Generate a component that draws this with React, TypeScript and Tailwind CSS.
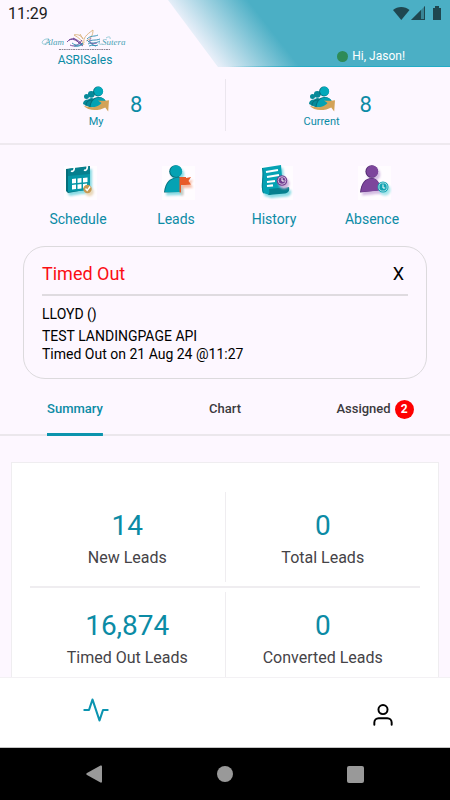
import { useState, type ReactNode } from "react";

function BrandLogo() {
  return (
    <svg width="90" height="24" viewBox="0 0 90 24" role="img" aria-label="Alam Sutera" fill="none">
      <g fontFamily="Liberation Serif, serif" fontStyle="italic" fontSize="9" fill="#4aa3b5">
        <text x="5" y="17">Alam</text>
        <text x="62" y="17">Sutera</text>
      </g>
      <path d="M9 11c-7-1-9 6-4 5 2 0 4-2 6-4M62 16c-3 1-4-1-2-2M66 10c3-2 5-1 4 1" stroke="#6fb9c8" strokeWidth="0.7" />
      <path d="M44 17C42 12 39 10 34 7c3-1 7 0 9 4M44 15c-1-5 2-8 9-13 0 5-2 9-7 11M40 6l3 5" stroke="#d9b27c" strokeWidth="0.9" />
      <path d="M27 14c5-6 10-3 15 2M29 12c5-2 8 1 13 5M30 17c4 2 8 1 12-5M33 10c3 1 5 5 10 8" stroke="#6b3f93" strokeWidth="0.9" />
      <path d="M32 15c4 3 8 3 11 0M34 18c3 1 6 0 9-2M47 11c4-4 7-2 11-4M48 14c4-3 7-1 12-3M48 16c4-2 7 0 12-3M49 18c4-2 6 1 9-1M47 12c4 4 6 5 9 6" stroke="#2b8cb0" strokeWidth="0.9" />
      <path d="M51 10c-3 4 0 7 6 5" stroke="#6b3f93" strokeWidth="0.7" />
      <path d="M19 21.500h51" stroke="#8d8494" strokeWidth="1" strokeDasharray="2 0.7 1.4 0.6" />
    </svg>
  );
}

function CareIcon() {
  return (
    <svg width="28" height="28" viewBox="0 0 28 28" aria-hidden="true">
      <g fill="#078a99">
        <circle cx="4.500" cy="10.500" r="2.500" />
        <circle cx="9.300" cy="8.300" r="3.400" />
        <path d="M1 18c0-3 2-4.500 5-4.500L9 12c3 0 4 2 4 4l-4 6z" />
      </g>
      <path d="M4 20c0-4 2-6 6-6" stroke="#05626e" strokeWidth="0.8" fill="none" />
      <circle cx="16" cy="5.500" r="4.900" fill="#056f7b" />
      <circle cx="16.600" cy="5.200" r="4.500" fill="#04a9bb" />
      <path d="M7.500 21c.5-6 4-10 9-10 4 0 6 2 7 4l-6 7z" fill="#056f7b" />
      <path d="M8.500 21c.5-5.500 4-9.500 8.500-9.500 4 0 6 2 7 4l-6 6z" fill="#04a2b3" />
      <path d="M1.500 19.500c4 1.500 8 2 11 1.500 4-.8 5.500-2.300 7-4L16 14.500c3 .5 6 .5 11-.2l-.8 11.200-3-4C17 25 6 25.500 1.500 19.500z" fill="#d3a358" />
    </svg>
  );
}

function IconFrame({ children }: { children: ReactNode }) {
  return (
    <svg width="40" height="40" viewBox="0 0 40 40" aria-hidden="true">
      <rect x="6" y="4" width="33" height="34" fill="#fffcff" />
      {children}
    </svg>
  );
}

function ScheduleIcon() {
  return (
    <IconFrame>
      <g className="drop-shadow-[2px_3px_1px_#8adbe4]">
        <path d="M8 7l24-3v23L10 31l-2-2z" fill="#056d7a" />
        <path d="M10 7l22-2v23l-22 2z" fill="#0596a6" />
        <path d="M10 7l22-2v7l-22 2z" fill="#067f8e" />
      </g>
      <path d="M13 9c2 1 4-1 3-4M26 8c2 1 4-1 3-4" stroke="#fff" strokeWidth="1.700" fill="none" />
      <path d="M14 17l4-.4v4.400l-4 .4zM19.500 16.500l4-.4v4.400l-4 .4zM25 16l4.500-.4V20l-4.500.4zM14 23l4-.4v4.400l-4 .4zM19.500 22.500l4-.4v4.400l-4 .4zM25 22l4-.4v3l-4 2z" fill="#fff" />
      <g className="drop-shadow-[2px_3px_1px_#ecd9bb]">
        <circle cx="29.500" cy="27" r="4.200" fill="#c79a54" />
      </g>
      <path d="M27.500 26.500l1.700 2 3-4" stroke="#fff" strokeWidth="1.400" fill="none" />
    </IconFrame>
  );
}

function LeadsIcon() {
  return (
    <IconFrame>
      <g className="drop-shadow-[2px_3px_1px_#8adbe4]">
        <circle cx="19.500" cy="9.500" r="6.300" fill="#056d7a" />
        <path d="M8 30.500C9 20 14 15 24 15v15z" fill="#056d7a" />
        <circle cx="20.200" cy="9.200" r="5.900" fill="#05a2b3" />
        <path d="M9 30C10 20 15 15.500 25 15.500V30z" fill="#05a2b3" />
      </g>
      <g className="drop-shadow-[2px_3px_1px_#f6b9a3]">
        <path d="M23.500 15H30v1l5-1-2.500 4 2.500 3.500-6 .5h-4v7.500h-1.500z" fill="#e85a28" />
      </g>
    </IconFrame>
  );
}

function HistoryIcon() {
  return (
    <IconFrame>
      <g className="drop-shadow-[2px_3px_1px_#8adbe4]">
        <path d="M8 6l19-3 2 23-13 7-7-2c-3-8 1-16-1-25z" fill="#05a2b3" />
        <path d="M8 6c2 9-2 17 1 25l1 .5c-3-8 1-17-1-25.500z" fill="#067f8e" />
        <path d="M15 27l20-2c1 4-1 6-4 6.500L14 33c2-2 1.500-4 1-6z" fill="#067f8e" />
      </g>
      <path d="M12 10l12-2M13 15l12-2M13 20l8-1M13 24l6-.7" stroke="#fff" strokeWidth="2.200" />
      <g className="drop-shadow-[2px_3px_1px_#cdb4dc]">
        <circle cx="28" cy="18.500" r="5.300" fill="#713f91" />
      </g>
      <circle cx="28" cy="18.500" r="3.800" stroke="#d8c4e2" strokeWidth="0.9" fill="none" />
      <path d="M28 16v3h2.500" stroke="#fff" strokeWidth="1" fill="none" />
    </IconFrame>
  );
}

function AbsenceIcon() {
  return (
    <IconFrame>
      <g className="drop-shadow-[2px_3px_1px_#d3bce2]">
        <circle cx="19.700" cy="9.500" r="6.300" fill="#512a70" />
        <path d="M8 30.500C9 21 13 16 20 16c5 0 8 5 9 12z" fill="#512a70" />
        <circle cx="20.300" cy="9.300" r="5.900" fill="#7d469c" />
        <path d="M9 30C10 21 14 16.500 20 16.500c5 0 8 4.500 9 12z" fill="#7d469c" />
      </g>
      <g className="drop-shadow-[2px_3px_1px_#a5e5ea]">
        <circle cx="31" cy="25" r="5.500" fill="#12a3b2" />
      </g>
      <circle cx="31" cy="25" r="4.100" stroke="#b6e5ea" strokeWidth="0.9" fill="none" />
      <path d="M31 22.500V26h2.200" stroke="#fff" strokeWidth="1" fill="none" />
    </IconFrame>
  );
}

function StatusIcons() {
  return (
    <svg width="49" height="15" viewBox="0 0 49 15" aria-label="Wi-Fi, signal and battery status" role="img" fill="#1f4750">
      <path d="M0 4C4.500 0 12 0 16.500 4L8.300 14z" />
      <path d="M18 14L32 0v14z" opacity="0.4" />
      <path d="M18 14L28 4v10zM31 1l1-1v14h-4v-1h3z" />
      <path d="M40 2h2V0h4v2h2v12h-8z" />
    </svg>
  );
}

function PortfolioStat({ label, value }: { label: string; value: string }) {
  return (
    <div className="flex flex-1 items-center justify-center gap-5 border-[#ebe6ee] first:border-r">
      <div className="flex flex-col items-center pt-1.5">
        <CareIcon />
        <span className="text-[11px] leading-4">{label}</span>
      </div>
      <span className="text-[22px] leading-7">{value}</span>
    </div>
  );
}

const actions = [
  { label: "Schedule", icon: <ScheduleIcon /> },
  { label: "Leads", icon: <LeadsIcon /> },
  { label: "History", icon: <HistoryIcon /> },
  { label: "Absence", icon: <AbsenceIcon /> },
];

const metrics = [
  [
    { value: "14", label: "New Leads" },
    { value: "0", label: "Total Leads" },
  ],
  [
    { value: "16,874", label: "Timed Out Leads" },
    { value: "0", label: "Converted Leads" },
  ],
];

export default function App() {
  const [tab, setTab] = useState("Summary");
  const [noticeOpen, setNoticeOpen] = useState(true);

  return (
    <div className="flex h-screen flex-col bg-[#fdf7ff] font-[Roboto,sans-serif] text-[#0b8ba5]">
      <header className="relative h-[67px] shrink-0">
        <div className="absolute inset-y-0 right-0 left-[168px] flex items-end bg-[linear-gradient(52deg,#e6eef8_41px,#4bafc5_104px)] [clip-path:polygon(0_0,100%_0,100%_100%,50px_100%)]">
          <div className="h-px w-full bg-[linear-gradient(90deg,transparent_60px,#22acc6_140px)]" />
        </div>
        <div className="relative flex h-full justify-between">
          <div className="flex flex-col pl-2">
            <time className="pt-1 text-[16px] leading-5 text-[#1b1b1b]">11:29</time>
            <div className="flex flex-col items-center pt-1 pl-8">
              <BrandLogo />
              <span className="text-[12px] leading-4">ASRISales</span>
            </div>
          </div>
          <div className="flex flex-col items-end pt-1.5">
            <div className="pr-2">
              <StatusIcons />
            </div>
            <div className="flex items-center gap-1 pt-[27px] pr-[45px]">
              <span className="size-[11px] rounded-full bg-[#2e8b57]" />
              <span className="text-[12px] leading-4 text-white">Hi, Jason!</span>
            </div>
          </div>
        </div>
      </header>

      <main className="min-h-0 flex-1 overflow-hidden">
        <section className="flex h-[78px] border-b-2 border-[#eee9ef] py-3" aria-label="Portfolio">
          <PortfolioStat label="My" value="8" />
          <PortfolioStat label="Current" value="8" />
        </section>

        <nav className="grid grid-cols-4 px-[29px] pt-[17px]" aria-label="Shortcuts">
          {actions.map((action) => (
            <button key={action.label} type="button" className="flex flex-col items-center gap-2">
              {action.icon}
              <span className="text-[14px] leading-[18px]">{action.label}</span>
            </button>
          ))}
        </nav>

        {noticeOpen && (
          <section className="mx-[23px] mt-[18px] rounded-[22px] border border-[#dcdadd] px-[18px] py-[15px] text-[14px] text-black">
            <div className="flex items-center justify-between border-b-2 border-[#dfdbe0] pb-2">
              <h2 className="text-[18px] leading-6 text-[#fb0d14]">Timed Out</h2>
              <button type="button" aria-label="Dismiss" className="pr-1 text-[18px] leading-6" onClick={() => setNoticeOpen(false)}>
                X
              </button>
            </div>
            <p className="pt-2 leading-5">LLOYD ()</p>
            <p className="pt-[3px] leading-[18px]">TEST LANDINGPAGE API</p>
            <p className="leading-[18px]">Timed Out on 21 Aug 24 @11:27</p>
          </section>
        )}

        <div role="tablist" className="mt-[3px] grid h-[54px] grid-cols-3 border-b-2 border-[#ebe7ec] text-[13px] font-medium">
          {["Summary", "Chart", "Assigned"].map((name) => (
            <button
              key={name}
              type="button"
              role="tab"
              aria-selected={tab === name}
              onClick={() => setTab(name)}
              className="group flex justify-center text-[#3b3a3d] aria-selected:text-[#0b8ba5]"
            >
              <span className="-mb-0.5 flex h-[54px] items-center gap-1 rounded-t-sm bg-[length:100%_3px] bg-bottom bg-no-repeat group-aria-selected:bg-[linear-gradient(#0b94ad,#0b94ad)]">
                {name}
                {name === "Assigned" && (
                  <span className="flex size-[19px] items-center justify-center rounded-full bg-[#fe0000] text-[12px] font-bold text-white">2</span>
                )}
              </span>
            </button>
          ))}
        </div>

        <section className="mx-[11px] mt-[26px] border border-[#efedf0] bg-white px-[18px] pt-[29px]" aria-label="Lead summary">
          {metrics.map((row) => (
            <div key={row[0].label} className="mb-1 flex border-[#efedf0] first:border-b-2 first:pb-1">
              {row.map((metric) => (
                <div key={metric.label} className="flex h-[90px] flex-1 flex-col items-center border-[#efedf0] pt-[18px] first:border-r">
                  <span className="text-[28px] leading-8">{metric.value}</span>
                  <span className="pt-1 text-[16px] leading-6 text-[#454347]">{metric.label}</span>
                </div>
              ))}
            </div>
          ))}
        </section>
      </main>

      <nav className="flex h-[71px] shrink-0 items-start justify-between border-t border-b border-t-[#f3f1f4] border-b-[#c4c4c4] bg-white pr-[54px] pl-[82px]" aria-label="Main">
        <button type="button" aria-label="Activity" className="pt-[18px]">
          <svg width="28" height="28" viewBox="0 0 24 24" fill="none" stroke="#0b94b0" strokeWidth="1.800" strokeLinecap="round" strokeLinejoin="round">
            <polyline points="22 12 18 12 15 21 9 3 6 12 2 12" />
          </svg>
        </button>
        <button type="button" aria-label="Profile" className="pt-6 text-black">
          <svg width="26" height="26" viewBox="0 0 24 24" fill="none" stroke="currentColor" strokeWidth="1.800" strokeLinecap="round" strokeLinejoin="round">
            <path d="M20 21v-2a4 4 0 0 0-4-4H8a4 4 0 0 0-4 4v2" />
            <circle cx="12" cy="7" r="4.200" />
          </svg>
        </button>
      </nav>

      <nav className="flex h-[52px] shrink-0 items-center justify-between bg-black px-[86px] text-[#999]" aria-label="System">
        <button type="button" aria-label="Back">
          <svg width="17" height="18" viewBox="0 0 17 18" fill="currentColor">
            <path d="M1 8L14.500.5Q16 0 16 1.500v15q0 1.500-1.500 1L1 10Q-.5 9 1 8z" />
          </svg>
        </button>
        <button type="button" aria-label="Home" className="size-4 rounded-full bg-[#999]" />
        <button type="button" aria-label="Recent apps" className="size-[17px] rounded-xs bg-[#999]" />
      </nav>
    </div>
  );
}
